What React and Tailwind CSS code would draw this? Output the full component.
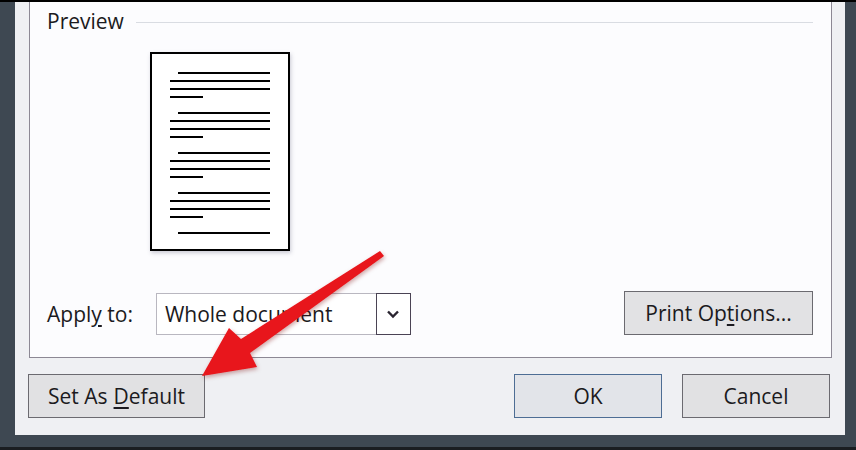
import React from 'react'

const FONT = { fontFamily: '"Open Sans", "Noto Sans", sans-serif' }

function PageLines() {
  // four paragraphs plus a first line of a fifth
  const para = (key, last) => (
    <div key={key} className={`flex flex-col items-start gap-[6px] ${last ? '' : 'mb-[14px]'}`}>
      <div className="ml-[8px] h-[2px] w-[92px] bg-black" />
      <div className="h-[2px] w-[100px] bg-black" />
      <div className="h-[2px] w-[100px] bg-black" />
      <div className="h-[2px] w-[33px] bg-black" />
    </div>
  )
  return (
    <div className="flex flex-col pl-[18px] pt-[18px]">
      {para('a')}
      {para('b')}
      {para('c')}
      {para('d')}
      <div className="ml-[8px] h-[2px] w-[92px] bg-black" />
    </div>
  )
}

function Button({ children, className = '' }) {
  return (
    <div
      className={`flex h-[44px] items-center justify-center border text-[21px] leading-none text-[#1b1a20] ${className}`}
    >
      {children}
    </div>
  )
}

export default function App() {
  return (
    <div
      className="relative h-[450px] w-[856px] overflow-hidden border-t-2 border-b-[3px] border-t-black border-b-[#1a1d21] bg-[#3e4852] pl-[15px] pr-[11px] pb-[12px]"
      style={FONT}
    >
      <div className="flex h-full flex-col bg-[#eff0f3] px-[13px]">
        {/* tab page */}
        <div className="ml-px flex h-[356px] flex-col border-x border-b border-[#8c8894] bg-[#fcfcfe] pl-[17px] pr-[18px] pt-[7px]">
          <div className="flex items-center">
            <span className="text-[21px] leading-[24px] text-[#1b1a20]">Preview</span>
            <div className="ml-[12px] mt-[2px] h-px flex-1 bg-[#d9dce2]" />
          </div>

          <div className="ml-[103px] mt-[19px] h-[199px] w-[140px] border-2 border-black bg-white shadow-[1px_2px_4px_rgba(60,60,90,0.25)]">
            <PageLines />
          </div>

          <div className="mt-[42px] flex items-center">
            <span className="text-[21px] leading-none text-[#1b1a20]">
              Appl<span className="underline underline-offset-[3px]">y</span> to:
            </span>
            <div className="ml-[23px] flex h-[42px] w-[255px] items-center border border-[#b9b7c0] bg-white">
              <span className="flex-1 pl-[8px] text-[21px] leading-none text-[#1b1a20]">Whole document</span>
              <div className="flex h-[42px] w-[35px] items-center justify-center border border-[#4a4354] bg-white -mr-px">
                <svg width="14" height="10" viewBox="0 0 14 10">
                  <path d="M2 2.5 L7 7.5 L12 2.5" fill="none" stroke="#2a2430" strokeWidth="2.4" />
                </svg>
              </div>
            </div>
            <Button className="ml-auto mt-[-2px] h-[43px] w-[189px] border-[#6b6a70] bg-[#e2e2e4]">
              Print Op<span className="underline underline-offset-[3px]">t</span>ions...
            </Button>
          </div>
        </div>

        {/* footer buttons */}
        <div className="mr-[2px] mt-[16px] flex items-center">
          <Button className="w-[177px] border-[#6b6a70] bg-[#e1e1e3]">
            Set As <span className="ml-[6px] underline underline-offset-[3px]">D</span>efault
          </Button>
          <Button className="ml-auto w-[148px] border-[#4d6d94] bg-[#e2e4e9]">OK</Button>
          <Button className="ml-[20px] w-[148px] border-[#6b6a70] bg-[#e1e1e3]">Cancel</Button>
        </div>
      </div>

      {/* red annotation arrow */}
      <svg
        className="pointer-events-none absolute left-0 top-[-2px]"
        width="856"
        height="450"
        viewBox="0 0 856 450"
      >
        <defs>
          <filter id="sh" x="-20%" y="-20%" width="140%" height="140%">
            <feDropShadow dx="1" dy="2" stdDeviation="2" floodColor="#700" floodOpacity="0.35" />
          </filter>
        </defs>
        <polygon
          points="202,376 229,328 241,339 380,251 384,256 250,353 257,367"
          fill="#e8141a"
          filter="url(#sh)"
        />
      </svg>
    </div>
  )
}
